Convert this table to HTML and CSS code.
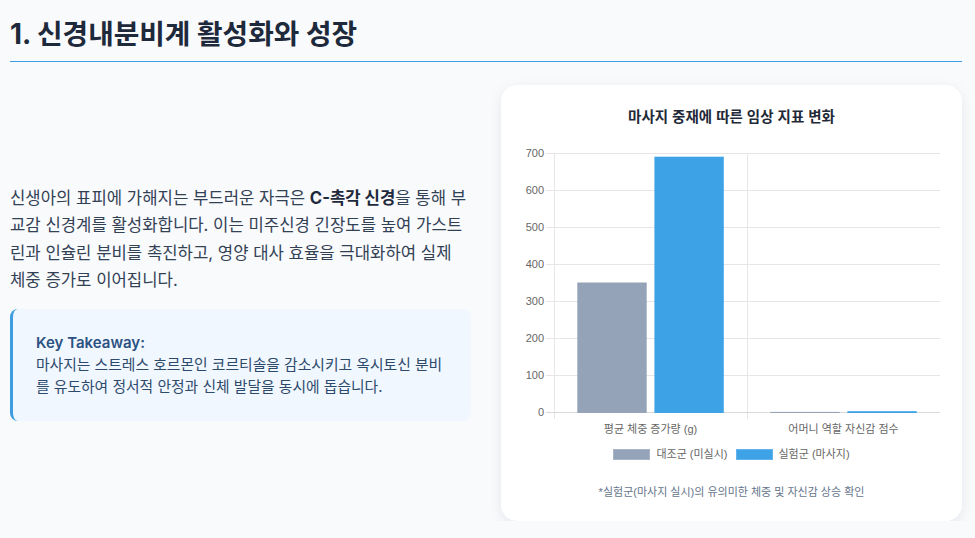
FILE: index.html
```html
<!DOCTYPE html>
<html lang="ko">
<head>
<meta charset="utf-8">
<title>신경내분비계 활성화와 성장</title>
<link rel="stylesheet" href="styles.css">
</head>
<body>
<div class="page">
  <h1 class="title">1. 신경내분비계 활성화와 성장</h1>
  <div class="grid">
    <div class="text-col">
      <p class="lead">신생아의 표피에 가해지는 부드러운 자극은 <strong>C-촉각 신경</strong>을 통해 부교감 신경계를 활성화합니다. 이는 미주신경 긴장도를 높여 가스트린과 인슐린 분비를 촉진하고, 영양 대사 효율을 극대화하여 실제 체중 증가로 이어집니다.</p>
      <div class="takeaway">
        <strong class="takeaway-title">Key Takeaway:</strong>
        <p class="takeaway-text">마사지는 스트레스 호르몬인 코르티솔을 감소시키고 옥시토신 분비를 유도하여 정서적 안정과 신체 발달을 동시에 돕습니다.</p>
      </div>
    </div>
    <div class="card">
      <div class="chart-title">마사지 중재에 따른 임상 지표 변화</div>
      <svg class="plot" width="421" height="300" viewBox="0 0 421 300">
        <g class="grid-lines">
          <line x1="25" y1="13.5" x2="419" y2="13.5"/>
          <line x1="25" y1="50.5" x2="419" y2="50.5"/>
          <line x1="25" y1="87.5" x2="419" y2="87.5"/>
          <line x1="25" y1="124.5" x2="419" y2="124.5"/>
          <line x1="25" y1="161.5" x2="419" y2="161.5"/>
          <line x1="25" y1="198.5" x2="419" y2="198.5"/>
          <line x1="25" y1="235.5" x2="419" y2="235.5"/>
          <line x1="33.5" y1="13" x2="33.5" y2="279"/>
          <line x1="226.5" y1="13" x2="226.5" y2="279"/>
        </g>
        <line class="baseline" x1="25" y1="272.5" x2="419" y2="272.5"/>
        <g class="y-labels">
          <text x="23" y="17">700</text>
          <text x="23" y="54">600</text>
          <text x="23" y="91">500</text>
          <text x="23" y="128">400</text>
          <text x="23" y="165">300</text>
          <text x="23" y="202">200</text>
          <text x="23" y="239">100</text>
          <text x="23" y="276">0</text>
        </g>
        <rect class="bar-control" x="56.3" y="142.5" width="69.4" height="130.5"/>
        <rect class="bar-massage" x="133.4" y="16.7" width="69.4" height="256.3"/>
        <rect class="bar-control" x="249.3" y="271.9" width="69.4" height="1.1"/>
        <rect class="bar-massage" x="326.4" y="271.2" width="69.4" height="1.8"/>
        <g class="x-labels">
          <text x="129.5" y="293">평균 체중 증가량 (g)</text>
          <text x="322.5" y="293">어머니 역할 자신감 점수</text>
        </g>
      </svg>
      <div class="legend">
        <span class="legend-item"><span class="swatch swatch-control"></span>대조군 (미실시)</span>
        <span class="legend-item"><span class="swatch swatch-massage"></span>실험군 (마사지)</span>
      </div>
      <p class="footnote">*실험군(마사지 실시)의 유의미한 체중 및 자신감 상승 확인</p>
    </div>
  </div>
</div>
</body>
</html>
```
FILE: styles.css
```css
* { box-sizing: border-box; }

html, body {
  margin: 0;
  padding: 0;
  background: #f8fafc;
}

body {
  font-family: "Inter", "Noto Sans CJK KR", sans-serif;
  color: #334155;
}

.page {
  width: 975px;
  padding: 0 13px 0 10px;
}

.title {
  margin: 0;
  padding: 17px 0 10px;
  font-size: 27.8px;
  line-height: 34px;
  font-weight: 700;
  color: #1e293b;
  border-bottom: 1px solid #3d9de0;
}

.grid {
  margin-top: 23px;
  display: grid;
  grid-template-columns: 1fr 1fr;
  column-gap: 30px;
  align-items: center;
}

.lead {
  margin: 0 3px 15px 0;
  font-size: 16.7px;
  line-height: 27.2px;
  color: #334155;
}

.lead strong {
  font-weight: 700;
  color: #1e293b;
}

.takeaway {
  background: #f0f7ff;
  border-left: 3px solid #3d9de0;
  border-radius: 8px;
  padding: 23px 24px 22px 23px;
}

.takeaway-title {
  display: block;
  font-size: 15px;
  line-height: 22px;
  font-weight: 600;
  color: #2c5282;
}

.takeaway-text {
  margin: 0;
  font-size: 14.8px;
  line-height: 22.4px;
  color: #2d4a6b;
}

.card {
  background: #ffffff;
  border-radius: 16px;
  box-shadow: 0 4px 14px rgba(15, 23, 42, 0.08);
  padding: 22px 20px 22px;
}

.chart-title {
  text-align: center;
  font-family: "Liberation Sans", "Noto Sans CJK KR", sans-serif;
  font-size: 14.5px;
  line-height: 20px;
  font-weight: 700;
  color: #1f2937;
  margin-bottom: 13px;
}

.plot {
  display: block;
  font-family: "Liberation Sans", "Noto Sans CJK KR", sans-serif;
  font-size: 11px;
}

.grid-lines line {
  stroke: #e6e6e6;
  stroke-width: 1;
}

.baseline {
  stroke: #d9d9d9;
  stroke-width: 1;
}

.y-labels text {
  fill: #666666;
  text-anchor: end;
}

.x-labels text {
  fill: #666666;
  text-anchor: middle;
}

.bar-control { fill: #94a3b8; }
.bar-massage { fill: #3ea3e6; }

.legend {
  margin-top: 8px;
  display: flex;
  justify-content: center;
  gap: 8px;
  height: 12px;
  font-family: "Liberation Sans", "Noto Sans CJK KR", sans-serif;
  font-size: 11px;
  line-height: 12px;
  color: #666666;
}

.legend-item {
  display: flex;
  align-items: center;
  gap: 6px;
}

.swatch {
  display: inline-block;
  width: 37px;
  height: 11px;
}

.swatch-control { background: #94a3b8; border: 1px solid #a9b5c6; }
.swatch-massage { background: #3ea3e6; border: 1px solid #62b4ea; }

.footnote {
  margin: 25px 0 0;
  text-align: center;
  font-family: "Liberation Sans", "Noto Sans CJK KR", sans-serif;
  font-size: 11px;
  line-height: 14px;
  color: #64748b;
}
```
